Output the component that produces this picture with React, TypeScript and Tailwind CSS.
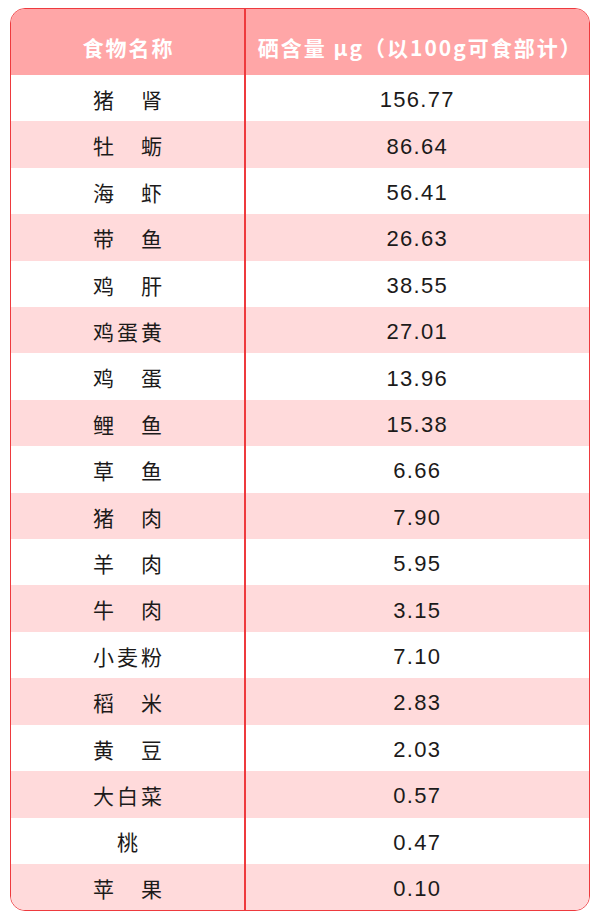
const rows: [string, string][] = [
  ['猪　肾', '156.77'],
  ['牡　蛎', '86.64'],
  ['海　虾', '56.41'],
  ['带　鱼', '26.63'],
  ['鸡　肝', '38.55'],
  ['鸡蛋黄', '27.01'],
  ['鸡　蛋', '13.96'],
  ['鲤　鱼', '15.38'],
  ['草　鱼', '6.66'],
  ['猪　肉', '7.90'],
  ['羊　肉', '5.95'],
  ['牛　肉', '3.15'],
  ['小麦粉', '7.10'],
  ['稻　米', '2.83'],
  ['黄　豆', '2.03'],
  ['大白菜', '0.57'],
  ['桃', '0.47'],
  ['苹　果', '0.10'],
]

const cjk = "font-['Noto_Sans_CJK_SC',sans-serif]"
const num = "font-['Liberation_Sans','Noto_Sans_CJK_SC',sans-serif]"

export default function App() {
  return (
    <div className="w-[600px] h-[923px] bg-white pt-[8px] pl-[10px]">
      <div className="w-[580px] rounded-[15px] border-[1.5px] border-[#ee3a3e] overflow-hidden">
        <div className="flex h-[66px] bg-[#ffa6a7] text-white">
          <div
            className={`w-[233px] flex items-center justify-center pt-[12px] text-[21px] font-bold tracking-[2px] ${cjk}`}
          >
            <span className="-mr-[2px]">食物名称</span>
          </div>
          <div className="w-[1.5px] bg-[#ee3a3e]" />
          <div
            className={`flex-1 flex items-center justify-center pt-[12px] pl-[6px] text-[21px] font-bold tracking-[2px] ${cjk}`}
          >
            <span>硒含量 μg（以100g可食部计）</span>
          </div>
        </div>
        {rows.map(([name, value], i) => (
          <div
            key={i}
            className={`flex h-[46.42px] ${i % 2 === 1 ? 'bg-[#ffdadb]' : 'bg-white'} text-[#1c1a1a]`}
          >
            <div
              className={`w-[233px] flex items-center justify-center pt-[3px] text-[21px] tracking-[3px] ${cjk}`}
            >
              <span className="-mr-[3px]">{name}</span>
            </div>
            <div className="w-[1.5px] bg-[#ee3a3e]" />
            <div
              className={`flex-1 flex items-center justify-center pt-[3px] text-[22px] tracking-[1.3px] ${num}`}
            >
              {value}
            </div>
          </div>
        ))}
      </div>
    </div>
  )
}
